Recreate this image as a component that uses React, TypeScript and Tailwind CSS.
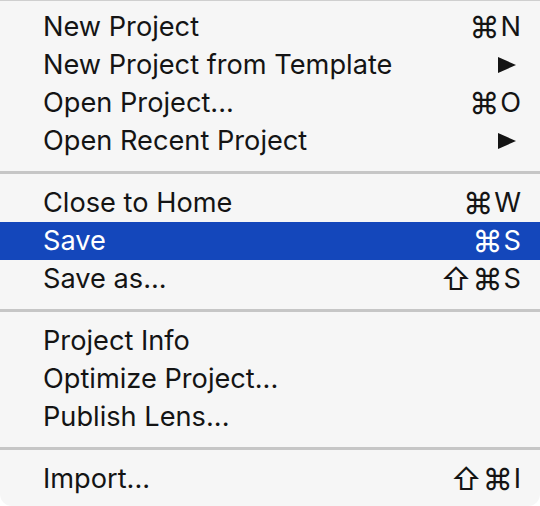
import React from "react";

type Item = {
  label: string;
  shortcut?: string;
  submenu?: boolean;
  active?: boolean;
};

const groups: Item[][] = [
  [
    { label: "New Project", shortcut: "⌘N" },
    { label: "New Project from Template", submenu: true },
    { label: "Open Project...", shortcut: "⌘O" },
    { label: "Open Recent Project", submenu: true },
  ],
  [
    { label: "Close to Home", shortcut: "⌘W" },
    { label: "Save", shortcut: "⌘S", active: true },
    { label: "Save as...", shortcut: "⇧⌘S" },
  ],
  [
    { label: "Project Info" },
    { label: "Optimize Project..." },
    { label: "Publish Lens..." },
  ],
  [{ label: "Import...", shortcut: "⇧⌘I" }],
];

const Shortcut: React.FC<{ keys: string }> = ({ keys }) => (
  <span className="flex items-center">
    {keys.split("").map((k, i) =>
      k === "⌘" || k === "⇧" ? (
        <span key={i} className="text-[30px] mr-[1px]">
          {k}
        </span>
      ) : (
        <span key={i}>{k}</span>
      )
    )}
  </span>
);

const MenuRow: React.FC<{ item: Item }> = ({ item }) => (
  <div
    className={`flex items-center justify-between h-[38px] pl-[43px] pr-[19px] ${
      item.active ? "bg-[#1447bb] text-white" : "text-[#141414]"
    }`}
  >
    <span>{item.label}</span>
    {item.shortcut && <Shortcut keys={item.shortcut} />}
    {item.submenu && (
      <svg width="18" height="16" viewBox="0 0 18 16" className="mr-[5px]">
        <path d="M0 0 L18 8 L0 16 Z" fill="currentColor" />
      </svg>
    )}
  </div>
);

const App: React.FC = () => {
  return (
    <div className="w-[540px] h-[506px] bg-white overflow-hidden">
      <div
        className="h-full bg-[#f6f6f6] border-t border-[#cfcfcf] rounded-b-[12px] pt-[7px] text-[27.2px] leading-none"
        style={{ fontFamily: "Inter, 'DejaVu Sans', sans-serif" }}
      >
        {groups.map((group, gi) => (
          <div key={gi}>
            {gi > 0 && <div className="h-[3px] bg-[#c6c6c6] mt-[11px] mb-[10px]" />}
            {group.map((item) => (
              <MenuRow key={item.label} item={item} />
            ))}
          </div>
        ))}
      </div>
    </div>
  );
};

export default App;
